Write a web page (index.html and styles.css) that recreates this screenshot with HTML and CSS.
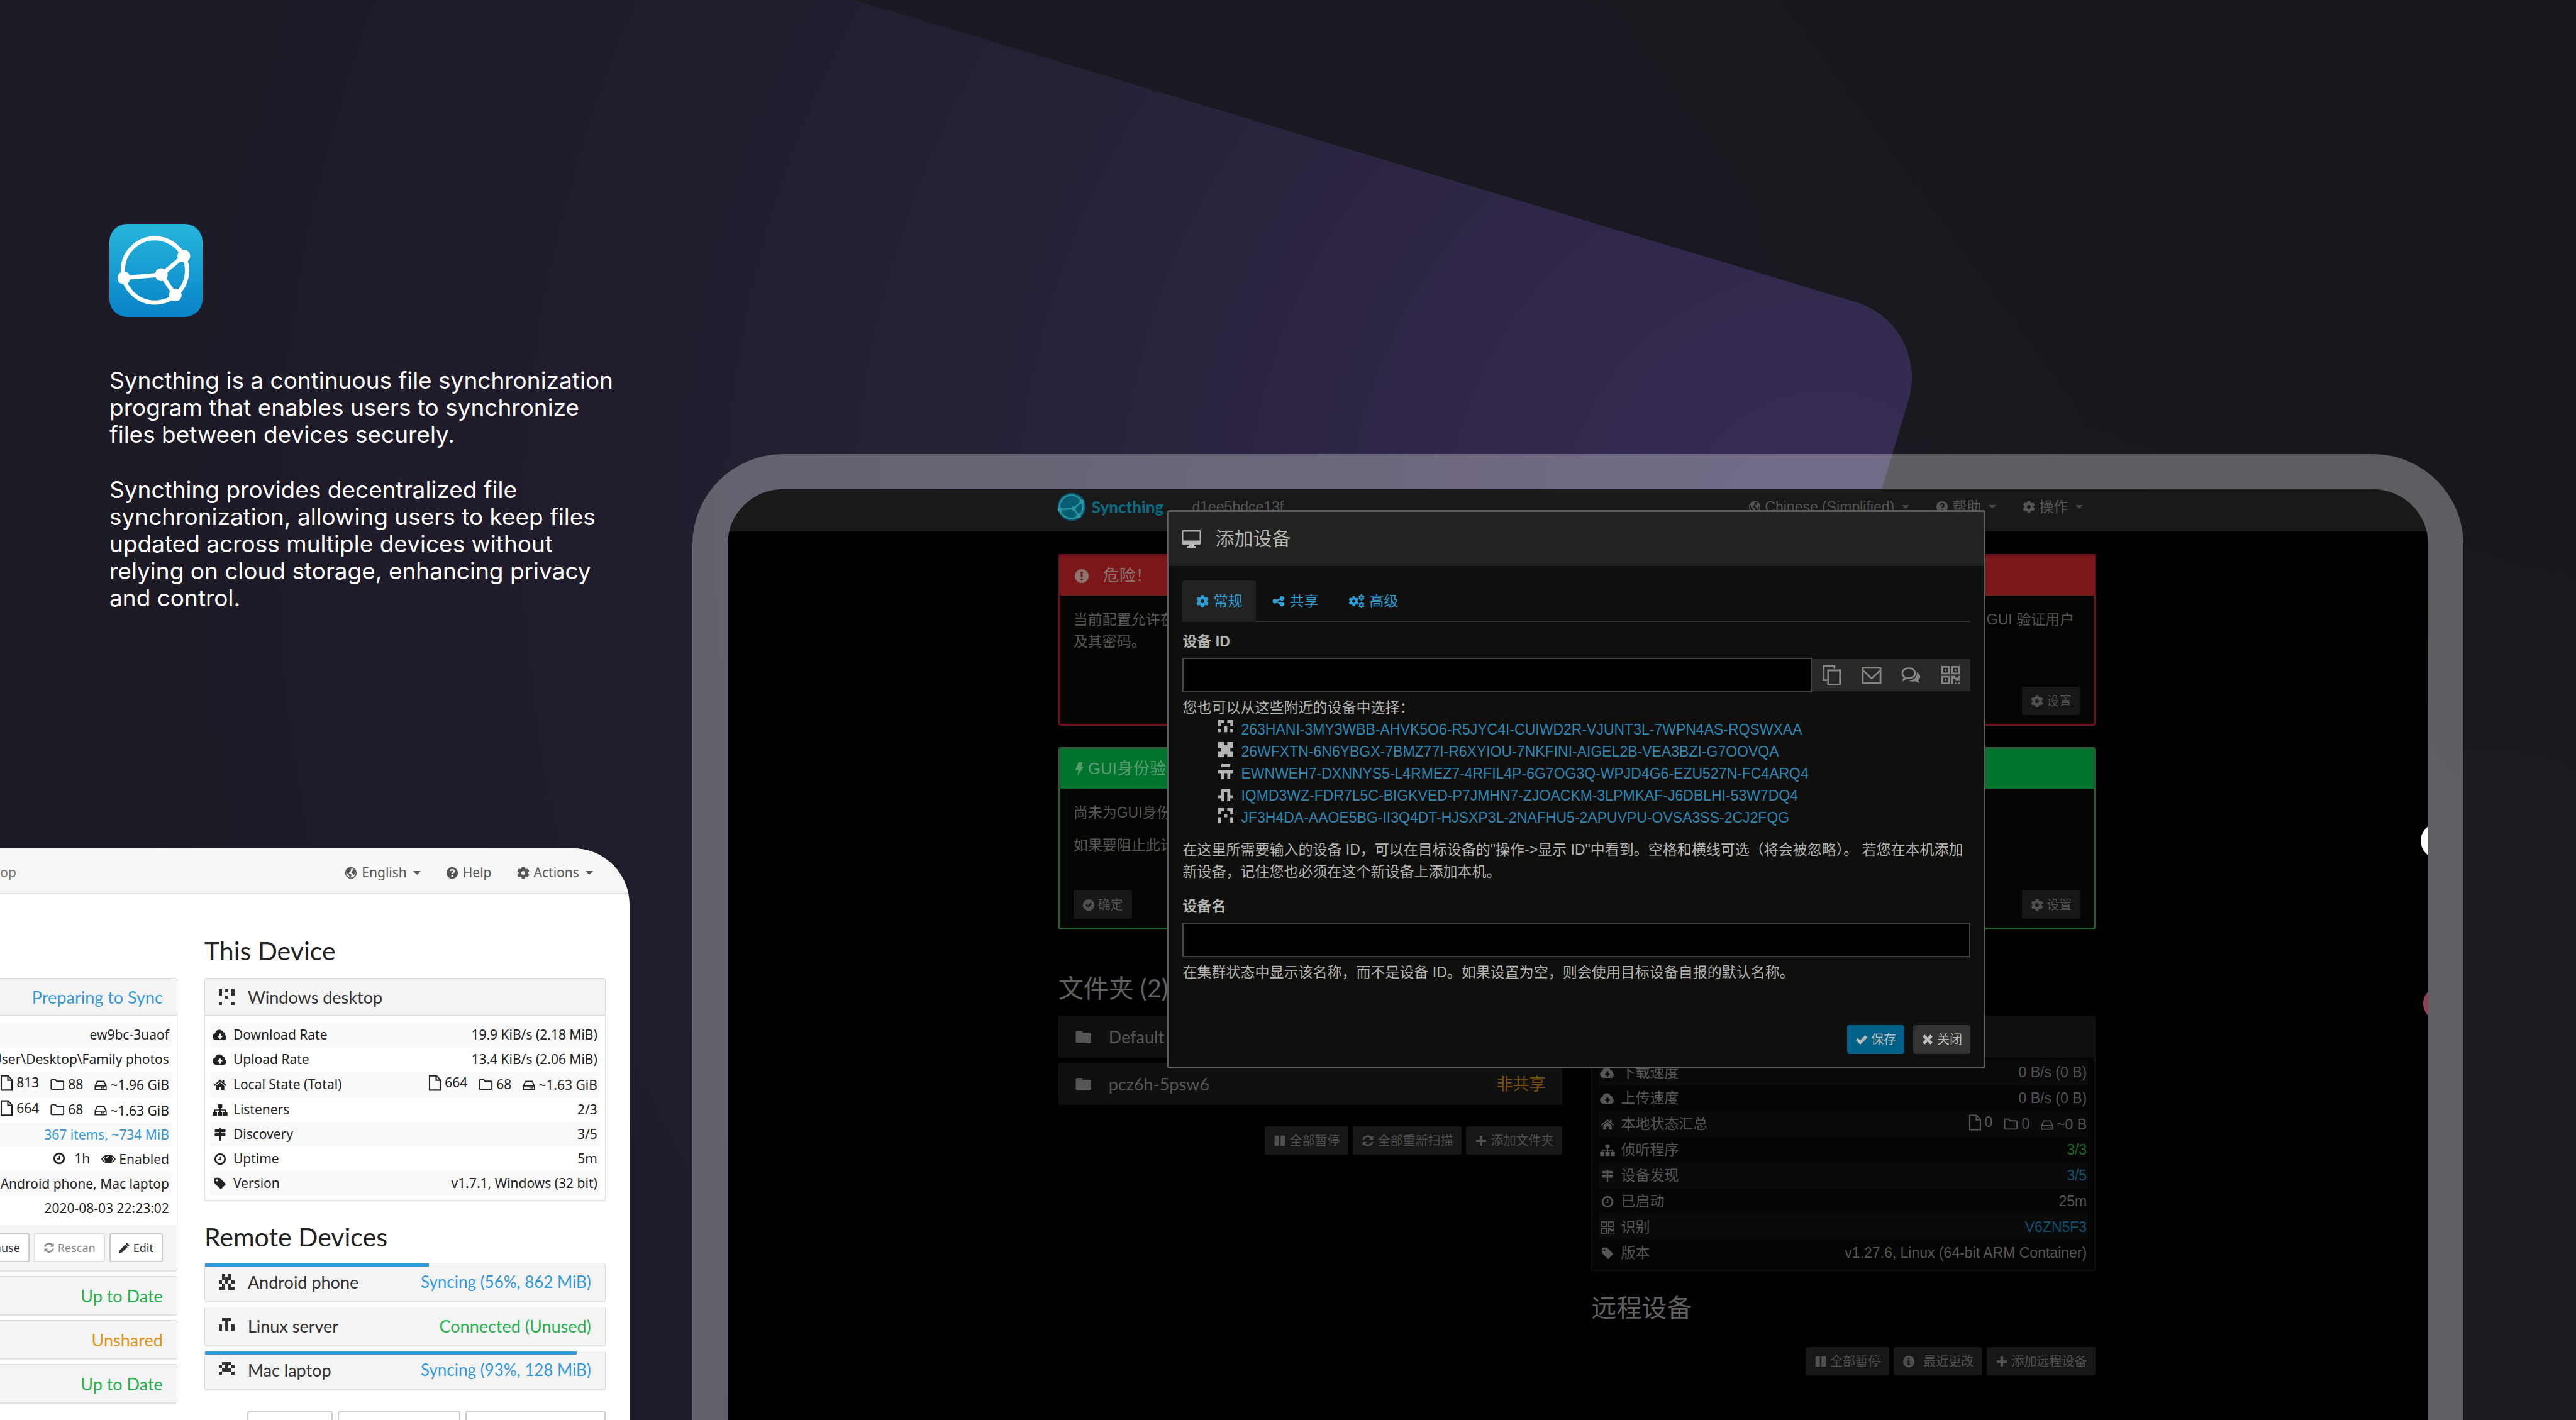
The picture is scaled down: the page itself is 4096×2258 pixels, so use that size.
FILE: index.html
```html
<!DOCTYPE html>
<html lang="en">
<head>
<meta charset="utf-8">
<meta name="viewport" content="width=device-width, initial-scale=1">
<title>Syncthing</title>
<link rel="stylesheet" href="styles.css">
</head>
<body>
<svg class="defs" aria-hidden="true">
  <symbol id="cog" viewBox="0 0 512 512"><path d="M487.4 315.7l-42.6-24.6c4.3-23.2 4.3-47 0-70.2l42.6-24.6c4.9-2.8 7.1-8.6 5.5-14-11.1-35.6-30-67.8-54.7-94.6-3.8-4.1-10-5.1-14.8-2.3L380.8 110c-17.9-15.4-38.5-27.3-60.8-35.1V25.8c0-5.6-3.9-10.5-9.4-11.7-36.7-8.2-74.3-7.8-109.2 0-5.5 1.2-9.4 6.1-9.4 11.7V75c-22.2 7.9-42.8 19.8-60.8 35.1L88.7 85.5c-4.9-2.8-11-1.9-14.8 2.3-24.7 26.7-43.6 58.9-54.7 94.6-1.7 5.4.6 11.2 5.5 14L67.3 221c-4.3 23.2-4.3 47 0 70.2l-42.6 24.6c-4.9 2.8-7.1 8.6-5.5 14 11.1 35.6 30 67.8 54.7 94.6 3.8 4.1 10 5.1 14.8 2.3l42.6-24.6c17.9 15.4 38.5 27.3 60.8 35.1v49.2c0 5.6 3.9 10.5 9.4 11.7 36.7 8.2 74.3 7.8 109.2 0 5.5-1.2 9.4-6.1 9.4-11.7v-49.2c22.2-7.9 42.8-19.8 60.8-35.1l42.6 24.6c4.9 2.8 11 1.9 14.8-2.3 24.7-26.7 43.6-58.9 54.7-94.6 1.5-5.5-.7-11.3-5.6-14.1zM256 336c-44.1 0-80-35.9-80-80s35.9-80 80-80 80 35.9 80 80-35.9 80-80 80z"/></symbol>
  <symbol id="cogs" viewBox="0 0 28 24"><use href="#cog" x="0" y="3" width="18" height="18"/><use href="#cog" x="17" y="0" width="11" height="11"/><use href="#cog" x="17" y="13" width="11" height="11"/></symbol>
  <symbol id="globe" viewBox="0 0 24 24"><path fill-rule="evenodd" d="M12 1a11 11 0 1 0 0 22 11 11 0 0 0 0-22zm0 2a9 9 0 1 1 0 18 9 9 0 0 1 0-18z"/><path d="M4 7l4-4 4-.5 1 2-2 2 1 1.500-2.500 2-1.500 3 3 .5 2.500 2.500-1.500 2.500-1 3.500-2-3-1-3-3-2.500zM15 4l4 2.500 2 4-1.500 1-1 4-2 1.500-1-3.500-2.500-2 .5-3 2.500-1z"/></symbol>
  <symbol id="question" viewBox="0 0 24 24"><path fill-rule="evenodd" d="M12 1a11 11 0 1 0 0 22 11 11 0 0 0 0-22zm-1.600 15.500h3.200v3.100h-3.200zM12 4.600c3 0 5 1.800 5 4.300 0 3.100-3.400 3.500-3.400 5.600h-3.200c0-3.600 3.100-3.900 3.100-5.500 0-.9-.6-1.500-1.600-1.500s-1.700.6-2.200 1.600L7.300 7.500C8.200 5.700 9.900 4.600 12 4.600z"/></symbol>
  <symbol id="exclaim" viewBox="0 0 24 24"><path fill-rule="evenodd" d="M12 1a11 11 0 1 0 0 22 11 11 0 0 0 0-22zM10.200 5h3.600l-.4 8.500h-2.800zm.2 10.500h3.200v3.200h-3.200z"/></symbol>
  <symbol id="info" viewBox="0 0 24 24"><path fill-rule="evenodd" d="M12 1a11 11 0 1 0 0 22 11 11 0 0 0 0-22zM10.400 4.800h3.200v3.100h-3.200zM9 10h4.600v6.500H15V19H9v-2.500h1.400v-4H9z"/></symbol>
  <symbol id="checkcircle" viewBox="0 0 24 24"><path fill-rule="evenodd" d="M12 1a11 11 0 1 0 0 22 11 11 0 0 0 0-22zM6 12.500l2.200-2.200 2.600 2.600 5.400-5.400 2.200 2.200-7.600 7.600z"/></symbol>
  <symbol id="clock" viewBox="0 0 24 24"><path fill-rule="evenodd" d="M12 1a11 11 0 1 0 0 22 11 11 0 0 0 0-22zm0 3.300a7.700 7.700 0 1 1 0 15.400 7.700 7.700 0 0 1 0-15.400z"/><path d="M11.500 7h2v7H8v-2h3.500z"/></symbol>
  <symbol id="bolt" viewBox="0 0 16 24"><path d="M7 1h7l-3 7h4L5 23l2-10H2z"/></symbol>
  <symbol id="down" viewBox="0 0 30 24"><path fill-rule="evenodd" d="M7 22a7 7 0 0 1-2-13.600A8.500 8.500 0 0 1 21 6a5 5 0 0 1 4 6 5.500 5.500 0 0 1-2 10zM13 9v5H9.500l5.500 6 5.500-6H17V9z"/></symbol>
  <symbol id="up" viewBox="0 0 30 24"><path fill-rule="evenodd" d="M7 22a7 7 0 0 1-2-13.600A8.500 8.500 0 0 1 21 6a5 5 0 0 1 4 6 5.500 5.500 0 0 1-2 10zM13 20v-5H9.500L15 9l5.500 6H17v5z"/></symbol>
  <symbol id="home" viewBox="0 0 24 24"><path d="M12 2l4.500 4V3h3.300v6L24 12.700 22.500 14.500 12 5.300 1.500 14.500 0 12.700z"/><path d="M12 7.300l8 7V22h-5.800v-6H9.800v6H4v-7.700z"/></symbol>
  <symbol id="sitemap" viewBox="0 0 28 24"><path d="M10 1h8v7.500h-2.800V11H25v4.500h3V23h-8v-7.500h3V13h-7.800v2.500H18V23h-8v-7.500h2.800V13H5v2.500h3V23H0v-7.500h3V11h9.800V8.500H10z"/></symbol>
  <symbol id="signs" viewBox="0 0 24 24"><path d="M10.500 0h3v2H21l2.500 2.700L21 7.500h-7.500V9.500H22V15h-8.500v9h-3v-9H3L.5 12.300 3 9.500h7.500v-2H2V2h8.500z"/></symbol>
  <symbol id="tag" viewBox="0 0 24 24"><path fill-rule="evenodd" d="M1 3a2 2 0 0 1 2-2h8l12 12-9.500 10L1 11zM6 4a2 2 0 1 0 0 4 2 2 0 0 0 0-4z"/></symbol>
  <symbol id="qr" viewBox="0 0 22 22"><path fill-rule="evenodd" d="M0 0h10v10H0zM2 2v6h6V2zM12 0h10v10H12zM14 2v6h6V2zM0 12h10v10H0zM2 14v6h6v-6zM4 4h2v2H4zM16 4h2v2h-2zM4 16h2v2H4zM12 12h5v2h3v-2h2v6h-5v-2h-3v6h-2zM16 20h2v2h-2zM20 20h2v2h-2z"/></symbol>
  <symbol id="file" viewBox="0 0 22 26"><path fill-rule="evenodd" d="M1 0h13l7 7.500V26H1zM3.200 2.200v21.600h15.600V9.500H12V2.200zM14.200 3v4.300h4z"/></symbol>
  <symbol id="folder-o" viewBox="0 0 26 22"><path fill-rule="evenodd" d="M2.500 1h7L12 4h11l2 2v13l-2 2H2.500L.5 19V3zM2.800 3.200v15.600h20V6.200H11L8.500 3.200z"/></symbol>
  <symbol id="folder" viewBox="0 0 26 22"><path d="M2.500 1h7L12 4h11l2 2v13l-2 2H2.500L.5 19V3z"/></symbol>
  <symbol id="hdd" viewBox="0 0 24 20"><path fill-rule="evenodd" d="M5 1h14l4.500 10v8H.5v-8zM6.400 3L3.200 10h17.600L17.600 3zM2.500 12v5h19v-5zM13 13.500h2v2h-2zM17 13.500h2v2h-2z"/></symbol>
  <symbol id="eye" viewBox="0 0 28 20"><path fill-rule="evenodd" d="M0 10C3 4.500 8 1.500 14 1.500S25 4.500 28 10c-3 5.500-8 8.500-14 8.500S3 15.500 0 10zm2.500 0c1.500 2.300 3.500 4 5.800 5.200a8 8 0 0 1 0-10.400C6 6 4 7.700 2.500 10zm23 0c-1.500-2.300-3.500-4-5.800-5.200a8 8 0 0 1 0 10.400C22 14 24 12.300 25.500 10zM11 8.500a4 4 0 0 1 3.500-3V4A5 5 0 0 0 9.500 8.500z"/></symbol>
  <symbol id="refresh" viewBox="0 0 24 24"><path d="M22 2v8h-8l3-3A7.300 7.300 0 0 0 5 10H1.600A10.600 10.600 0 0 1 19.400 4.600zM2 22v-8h8l-3 3a7.300 7.300 0 0 0 12-3h3.400A10.600 10.600 0 0 1 4.600 19.400z"/></symbol>
  <symbol id="pencil" viewBox="0 0 24 24"><path d="M17.500 1.500l5 5-3 3-5-5zM13.300 5.700l5 5L7 22l-6 1 1-6z"/></symbol>
  <symbol id="pause" viewBox="0 0 22 24"><path d="M1 2h8.500v20H1zM12.500 2H21v20h-8.500z"/></symbol>
  <symbol id="plus" viewBox="0 0 22 24"><path d="M8.500 2.500h5v7h7v5h-7v7h-5v-7h-7v-5h7z"/></symbol>
  <symbol id="check" viewBox="0 0 24 24"><path d="M1 13l4-4 4.500 4.500L19 4l4 4L9.500 21.500z"/></symbol>
  <symbol id="times" viewBox="0 0 24 24"><path d="M6.500 2.500L12 8l5.500-5.500 4 4L16 12l5.500 5.500-4 4L12 16l-5.500 5.500-4-4L8 12 2.500 6.500z"/></symbol>
  <symbol id="share" viewBox="0 0 24 24"><path d="M18.500 2a4.500 4.500 0 1 1-3.300 7.600L9.500 12l5.700 2.400a4.500 4.500 0 1 1-1.200 2.800L8.300 15a4.500 4.500 0 1 1 0-6L14 6.800A4.500 4.500 0 0 1 18.500 2z"/></symbol>
  <symbol id="monitor" viewBox="0 0 31 28"><path fill-rule="evenodd" d="M2 0h27l2 2v19l-2 2H19l1 3h2v2H9v-2h2l1-3H2l-2-2V2zM2.500 2.500v14h26v-14z"/></symbol>
  <symbol id="copy" viewBox="0 0 32 36"><path fill="none" stroke="currentColor" stroke-width="3" d="M8 26H2V2h18v5M9.500 9.500h20v24h-20z"/></symbol>
  <symbol id="mail" viewBox="0 0 34 30"><path fill="none" stroke="currentColor" stroke-width="3" d="M2 2h30v26H2zM3 7l14 13L31 7"/></symbol>
  <symbol id="chat" viewBox="0 0 36 30"><path fill="none" stroke="currentColor" stroke-width="3" d="M13.500 2C7 2 2 6 2 11c0 3 1.500 5.500 4 7l-2 5 6-3.500C18 21 25 17 25 11c0-5-5-9-11.500-9z"/><path d="M28 9c4 2 6 5 6 8 0 2.500-1.500 5-3.500 6.500L33 29l-8-3.500c-4 1-8 .5-11-1.500 9-.5 14.500-6 14-15z"/></symbol>
  <symbol id="caret" viewBox="0 0 12 6"><path d="M0 0h12L6 6z"/></symbol>
  <symbol id="mark" viewBox="0 0 174 174"><g fill="none" stroke="currentColor" stroke-width="8"><circle cx="85" cy="87" r="60"/><path d="M27 101l70-6 42-35M97 95l26 38"/></g><g><circle cx="27" cy="101" r="12"/><circle cx="97" cy="95" r="12"/><circle cx="139" cy="60" r="12"/><circle cx="123" cy="133" r="12"/></g></symbol>
  <symbol id="id-win" viewBox="0 0 5 5"><path d="M0 0h1v2H0zM2 0h1v1H2zM4 0h1v2H4zM2 2h1v1H2zM0 4h1v1H0zM4 4h1v1H4z"/></symbol>
  <symbol id="id-android" viewBox="0 0 5 5"><path d="M1 0h1v1h1V0h1v2H3v1H2V2H1zM0 2h1v1H0zM4 2h1v1H4zM1 3h1v2H0V4h1zM3 3h1v1h1v1H3z"/></symbol>
  <symbol id="id-linux" viewBox="0 0 5 5"><path d="M1 0h3v1H3v3H2V1H1zM0 2h1v2H0zM4 2h1v2H4z"/></symbol>
  <symbol id="id-mac" viewBox="0 0 5 5"><path d="M1 0h3v1H3v1h1v1H1V2h1V1H1zM0 1h1v1H0zM4 1h1v1H4zM0 3h1v1H0zM4 3h1v1H4z"/></symbol>
  <symbol id="id-1" viewBox="0 0 5 5"><path d="M0 0h2v1H1v1H0zM3 0h2v2H4V1H3zM2 2h1v2H2zM0 3h1v1H0zM4 3h1v1H4z"/></symbol>
  <symbol id="id-2" viewBox="0 0 5 5"><path d="M0 0h2v1h1V0h2v2H4v1h1v2H3V4H2v1H0V3h1V2H0z"/></symbol>
  <symbol id="id-3" viewBox="0 0 5 5"><path d="M1 0h3v1H1zM0 2h5v1H4v2H3V3H2v2H1V3H0z"/></symbol>
  <symbol id="id-4" viewBox="0 0 5 5"><path d="M1 1h3v2h1v1H4v1H3V2H2v3H1V4H0V3h1z"/></symbol>
  <symbol id="id-5" viewBox="0 0 5 5"><path d="M0 0h2v1H1v1H0zM3 0h2v2H4V1H3zM2 2h1v1H2zM0 3h1v2H0zM4 3h1v2H4z"/></symbol>
</svg>

<svg class="backdrop" viewBox="0 0 4096 2258" preserveAspectRatio="none" aria-hidden="true">
  <defs>
    <linearGradient id="base" x1="0" y1="0.4" x2="1" y2="0"><stop offset="0" stop-color="#1d1a26"/><stop offset="0.55" stop-color="#1a1922"/><stop offset="1" stop-color="#15171a"/></linearGradient>
    <radialGradient id="violet" gradientUnits="userSpaceOnUse" cx="2900" cy="850" r="2700"><stop offset="0" stop-color="#382e57"/><stop offset="0.2" stop-color="#31284b"/><stop offset="0.45" stop-color="#28223a"/><stop offset="0.7" stop-color="#211d2d"/><stop offset="1" stop-color="#1d1a26"/></radialGradient>
    <linearGradient id="floor" x1="0" y1="0" x2="0" y2="1"><stop offset="0.3" stop-color="#1c1d21" stop-opacity="0"/><stop offset="0.7" stop-color="#1c1d21"/></linearGradient>
  </defs>
  <rect width="4096" height="2258" fill="url(#base)"/>
  <rect x="3000" width="1096" height="2258" fill="url(#floor)"/>
  <path fill="url(#violet)" d="M0 0H1358L2950 480A125 125 0 0 1 3035 635L2547 2258H0z"/>
</svg>

<main class="stage">
  <section class="side">
    <div class="intro">
      <div class="app-logo"><svg><use href="#mark"/></svg></div>
      <p>Syncthing is a continuous file synchronization program that enables users to synchronize files between devices securely.</p>
      <p>Syncthing provides decentralized file synchronization, allowing users to keep files updated across multiple devices without relying on cloud storage, enhancing privacy and control.</p>
    </div>

    <div class="light">
      <nav class="light-nav">
        <span class="light-brand">Windows desktop</span>
        <a href="#"><svg class="icon"><use href="#globe"/></svg>English<svg class="caret"><use href="#caret"/></svg></a>
        <a href="#"><svg class="icon"><use href="#question"/></svg>Help</a>
        <a href="#"><svg class="icon"><use href="#cog"/></svg>Actions<svg class="caret"><use href="#caret"/></svg></a>
      </nav>
      <div class="light-body">
        <div class="col">
          <h3>Folders</h3>
          <article class="card">
            <header>Family photos<span class="blue">Preparing to Sync</span></header>
            <table>
              <tr><th>Folder ID</th><td>ew9bc-3uaof</td></tr>
              <tr><th>Folder Path</th><td>C:\Users\User\Desktop\Family photos</td></tr>
              <tr><th>Global State</th><td><span class="stat"><svg class="file"><use href="#file"/></svg>813</span><span class="stat"><svg class="dir"><use href="#folder-o"/></svg>88</span><span class="stat"><svg class="hdd"><use href="#hdd"/></svg>~1.96 GiB</span></td></tr>
              <tr><th>Local State</th><td><span class="stat"><svg class="file"><use href="#file"/></svg>664</span><span class="stat"><svg class="dir"><use href="#folder-o"/></svg>68</span><span class="stat"><svg class="hdd"><use href="#hdd"/></svg>~1.63 GiB</span></td></tr>
              <tr><th>Out of Sync Items</th><td><a class="blue" href="#">367 items, ~734 MiB</a></td></tr>
              <tr><th>Rescans</th><td><span class="stat wide"><svg class="icon"><use href="#clock"/></svg>1h</span><span class="stat"><svg class="eye"><use href="#eye"/></svg>Enabled</span></td></tr>
              <tr><th>Shared With</th><td>Android phone, Mac laptop</td></tr>
              <tr><th>Last Scan</th><td>2020-08-03 22:23:02</td></tr>
            </table>
            <footer>
              <button type="button"><svg class="icon"><use href="#pause"/></svg>Pause</button>
              <button type="button" disabled><svg class="icon"><use href="#refresh"/></svg>Rescan</button>
              <button type="button"><svg class="icon"><use href="#pencil"/></svg>Edit</button>
            </footer>
          </article>
          <article class="card"><header>Documents<span class="green">Up to Date</span></header></article>
          <article class="card"><header>Music<span class="orange">Unshared</span></header></article>
          <article class="card"><header>Notes<span class="green">Up to Date</span></header></article>
        </div>
        <div class="col">
          <h3>This Device</h3>
          <article class="card">
            <header><svg class="ident"><use href="#id-win"/></svg>Windows desktop</header>
            <table>
              <tr><th><svg class="icon wide-icon"><use href="#down"/></svg>Download Rate</th><td>19.9 KiB/s (2.18 MiB)</td></tr>
              <tr><th><svg class="icon wide-icon"><use href="#up"/></svg>Upload Rate</th><td>13.4 KiB/s (2.06 MiB)</td></tr>
              <tr><th><svg class="icon wide-icon"><use href="#home"/></svg>Local State (Total)</th><td><span class="stat"><svg class="file"><use href="#file"/></svg>664</span><span class="stat"><svg class="dir"><use href="#folder-o"/></svg>68</span><span class="stat"><svg class="hdd"><use href="#hdd"/></svg>~1.63 GiB</span></td></tr>
              <tr><th><svg class="icon wide-icon"><use href="#sitemap"/></svg>Listeners</th><td>2/3</td></tr>
              <tr><th><svg class="icon wide-icon"><use href="#signs"/></svg>Discovery</th><td>3/5</td></tr>
              <tr><th><svg class="icon wide-icon"><use href="#clock"/></svg>Uptime</th><td>5m</td></tr>
              <tr><th><svg class="icon wide-icon"><use href="#tag"/></svg>Version</th><td>v1.7.1, Windows (32 bit)</td></tr>
            </table>
          </article>
          <h3 class="second">Remote Devices</h3>
          <article class="card"><div class="bar" style="width:56%"></div><header><svg class="ident"><use href="#id-android"/></svg>Android phone<span class="blue progress">Syncing (56%, 862 MiB)</span></header></article>
          <article class="card"><header><svg class="ident"><use href="#id-linux"/></svg>Linux server<span class="green">Connected (Unused)</span></header></article>
          <article class="card"><div class="bar" style="width:93%"></div><header><svg class="ident"><use href="#id-mac"/></svg>Mac laptop<span class="blue progress">Syncing (93%, 128 MiB)</span></header></article>
          <div class="tail">
            <button type="button"><svg class="icon"><use href="#pause"/></svg>Pause All</button>
            <button type="button"><svg class="icon"><use href="#info"/></svg>Recent Changes</button>
            <button type="button"><svg class="icon"><use href="#plus"/></svg>Add Remote Device</button>
          </div>
        </div>
      </div>
    </div>
  </section>

  <section class="device" lang="zh-CN">
    <div class="screen">
      <nav class="dark-nav"><div class="wrap">
        <a class="brand" href="#"><svg><use href="#mark"/></svg>Syncthing</a>
        <span class="host">d1ee5hdce13f</span>
        <a class="first" href="#"><svg class="icon"><use href="#globe"/></svg>Chinese (Simplified)<svg class="caret"><use href="#caret"/></svg></a>
        <a href="#"><svg class="icon"><use href="#question"/></svg>帮助<svg class="caret"><use href="#caret"/></svg></a>
        <a href="#"><svg class="icon"><use href="#cog"/></svg>操作<svg class="caret"><use href="#caret"/></svg></a>
      </div></nav>

      <div class="wrap page">
        <article class="notice danger">
          <header><svg class="icon"><use href="#exclaim"/></svg>危险！</header>
          <div class="notice-body">
            <p class="split"><span>当前配置允许在不使用密码的情况下远程访问</span><span>请设置 GUI 验证用户</span></p>
            <p>及其密码。</p>
          </div>
          <footer><button class="dim push" type="button"><svg class="icon"><use href="#cog"/></svg>设置</button></footer>
        </article>
        <article class="notice success">
          <header><svg class="bolt"><use href="#bolt"/></svg>GUI身份验证</header>
          <div class="notice-body spaced">
            <p>尚未为GUI身份验证设置用户名和密码。</p>
            <p>如果要阻止此计算机上的其他用户访问，请设置身份验证。</p>
          </div>
          <footer><button class="dim" type="button"><svg class="icon"><use href="#checkcircle"/></svg>确定</button><button class="dim push" type="button"><svg class="icon"><use href="#cog"/></svg>设置</button></footer>
        </article>

        <div class="columns">
          <div>
            <h3>文件夹 (2)</h3>
            <div class="row"><svg class="dir"><use href="#folder"/></svg>Default Folder</div>
            <div class="row"><svg class="dir"><use href="#folder"/></svg>pcz6h-5psw6<span class="unshared">非共享</span></div>
            <div class="actions">
              <button class="dim" type="button"><svg class="icon"><use href="#pause"/></svg>全部暂停</button>
              <button class="dim" type="button"><svg class="icon"><use href="#refresh"/></svg>全部重新扫描</button>
              <button class="dim" type="button"><svg class="icon"><use href="#plus"/></svg>添加文件夹</button>
            </div>
          </div>
          <div>
            <h3>当前设备</h3>
            <div class="panel">
              <div class="row"></div>
              <table>
                <tr><th><svg class="icon wide-icon"><use href="#down"/></svg>下载速度</th><td>0 B/s (0 B)</td></tr>
                <tr><th><svg class="icon wide-icon"><use href="#up"/></svg>上传速度</th><td>0 B/s (0 B)</td></tr>
                <tr><th><svg class="icon wide-icon"><use href="#home"/></svg>本地状态汇总</th><td><span class="stat"><svg class="file"><use href="#file"/></svg>0</span><span class="stat"><svg class="dir"><use href="#folder-o"/></svg>0</span><span class="stat"><svg class="hdd"><use href="#hdd"/></svg>~0 B</span></td></tr>
                <tr><th><svg class="icon wide-icon"><use href="#sitemap"/></svg>侦听程序</th><td class="ok">3/3</td></tr>
                <tr><th><svg class="icon wide-icon"><use href="#signs"/></svg>设备发现</th><td class="part">3/5</td></tr>
                <tr><th><svg class="icon wide-icon"><use href="#clock"/></svg>已启动</th><td>25m</td></tr>
                <tr><th><svg class="icon wide-icon"><use href="#qr"/></svg>识别</th><td><a class="part" href="#">V6ZN5F3</a></td></tr>
                <tr><th><svg class="icon wide-icon"><use href="#tag"/></svg>版本</th><td>v1.27.6, Linux (64-bit ARM Container)</td></tr>
              </table>
            </div>
            <h3 class="second">远程设备</h3>
            <div class="actions close">
              <button class="dim" type="button"><svg class="icon"><use href="#pause"/></svg>全部暂停</button>
              <button class="dim roomy" type="button"><svg class="icon"><use href="#info"/></svg>最近更改</button>
              <button class="dim" type="button"><svg class="icon"><use href="#plus"/></svg>添加远程设备</button>
            </div>
          </div>
        </div>
      </div>

      <span class="dot white"></span>
      <span class="dot pink"></span>

      <form class="modal" role="dialog" aria-labelledby="dlg-title">
        <header><svg><use href="#monitor"/></svg><h2 id="dlg-title">添加设备</h2></header>
        <div class="modal-body">
          <div class="tabs">
            <a class="active" href="#"><svg class="icon"><use href="#cog"/></svg>常规</a>
            <a href="#"><svg class="icon"><use href="#share"/></svg>共享</a>
            <a href="#"><svg class="icon cogs"><use href="#cogs"/></svg>高级</a>
          </div>
          <label for="device-id">设备 ID</label>
          <div class="group">
            <input id="device-id" type="text">
            <button type="button" aria-label="复制"><svg><use href="#copy"/></svg></button>
            <button type="button" aria-label="邮件"><svg><use href="#mail"/></svg></button>
            <button type="button" aria-label="短信"><svg><use href="#chat"/></svg></button>
            <button type="button" aria-label="二维码"><svg class="qr"><use href="#qr"/></svg></button>
          </div>
          <p class="nearby">您也可以从这些附近的设备中选择：</p>
          <ul>
            <li><svg><use href="#id-1"/></svg><a href="#">263HANI-3MY3WBB-AHVK5O6-R5JYC4I-CUIWD2R-VJUNT3L-7WPN4AS-RQSWXAA</a></li>
            <li><svg><use href="#id-2"/></svg><a href="#">26WFXTN-6N6YBGX-7BMZ77I-R6XYIOU-7NKFINI-AIGEL2B-VEA3BZI-G7OOVQA</a></li>
            <li><svg><use href="#id-3"/></svg><a href="#">EWNWEH7-DXNNYS5-L4RMEZ7-4RFIL4P-6G7OG3Q-WPJD4G6-EZU527N-FC4ARQ4</a></li>
            <li><svg><use href="#id-4"/></svg><a href="#">IQMD3WZ-FDR7L5C-BIGKVED-P7JMHN7-ZJOACKM-3LPMKAF-J6DBLHI-53W7DQ4</a></li>
            <li><svg><use href="#id-5"/></svg><a href="#">JF3H4DA-AAOE5BG-II3Q4DT-HJSXP3L-2NAFHU5-2APUVPU-OVSA3SS-2CJ2FQG</a></li>
          </ul>
          <p class="help">在这里所需要输入的设备 ID，可以在目标设备的"操作-&gt;显示 ID"中看到。空格和横线可选（将会被忽略）。 若您在本机添加新设备，记住您也必须在这个新设备上添加本机。</p>
          <label for="device-name">设备名</label>
          <input id="device-name" type="text">
          <p>在集群状态中显示该名称，而不是设备 ID。如果设置为空，则会使用目标设备自报的默认名称。</p>
          <footer>
            <button class="save" type="button"><svg class="icon"><use href="#check"/></svg>保存</button>
            <button type="button"><svg class="icon"><use href="#times"/></svg>关闭</button>
          </footer>
        </div>
      </form>
    </div>
  </section>
</main>
</body>
</html>
```
FILE: styles.css
```css
*, *::before, *::after { box-sizing: border-box; }
html, body { margin: 0; height: 100%; overflow: hidden; background: #1a1922; }
h2, h3, p, ul { margin: 0; padding: 0; font-weight: 400; }
ul { list-style: none; }
a { color: inherit; text-decoration: none; }
button, input { font: inherit; color: inherit; margin: 0; }
svg { display: block; flex: none; fill: currentColor; }
table { width: 100%; border-collapse: collapse; }
th { font-weight: 400; text-align: left; }
.defs { position: absolute; width: 0; height: 0; }
.icon { width: 20px; height: 20px; }
.caret { width: 12px; height: 6px; }

.backdrop { position: absolute; inset: 0; width: 100%; height: 100%; }

.stage {
  position: relative;
  display: grid;
  grid-template-columns: 43fr 110fr 7fr;
  height: 100vh;
  overflow: hidden;
}

/* introduction */
.side { min-width: 0; padding-top: 356px; }
.intro {
  margin-left: 174px;
  max-width: 815px;
  color: #fff;
  font: 37px/43px Inter, sans-serif;
}
.intro p + p { margin-top: 45px; }
.app-logo {
  width: 148px;
  height: 148px;
  margin-bottom: 79px;
  border-radius: 28px;
  background: linear-gradient(#27b6dc, #0882c8);
}
.app-logo svg { width: 148px; height: 148px; }

/* light window */
.light {
  margin: 377px 100px 0 -384px;
  padding-bottom: 60px;
  border-top-right-radius: 90px;
  background: #fff;
  color: #222;
  overflow: hidden;
  font: 21px/35px "Noto Sans", sans-serif;
}
.light-nav {
  display: flex;
  align-items: center;
  gap: 40px;
  height: 73px;
  padding: 6px 58px 0 28px;
  border-bottom: 2px solid #e7e7e7;
  background: #f6f6f6;
  color: #555;
}
.light-nav a { display: flex; align-items: center; gap: 7px; }
.light-nav .caret { margin-left: 3px; }
.light-brand { width: 382px; margin-right: auto; text-align: right; color: #777; }
.light-body { display: grid; grid-template-columns: 1fr 1fr; gap: 43px; padding: 0 38px 0 28px; }
.light h3 { margin: 68px 0 21px; font: 41px/44px Lato, sans-serif; }
.light h3.second { margin: 36px 0 19px; }
.card {
  position: relative;
  border: 1px solid #ddd;
  border-radius: 3px;
  box-shadow: 0 1px 2px #0002;
}
.card + .card { margin-top: 8px; }
.card header {
  display: flex;
  align-items: center;
  height: 60px;
  padding: 0 22px;
  background: #f4f4f4;
  color: #333;
  font: 27px/35px Lato, sans-serif;
}
.card header span { margin-left: auto; }
.card header .progress { font-size: 26px; }
.card .ident { width: 25px; height: 25px; margin-right: 21px; }
.bar { position: absolute; top: 0; left: 0; height: 5px; background: #3598db; }
.card table { margin: 10px 8px 7px; width: calc(100% - 16px); border-top: 0; }
.card header:not(:last-child) { border-bottom: 2px solid #ddd; }
.card th, .card td { height: 39px; padding: 0 4px; line-height: 35px; }
.card tr:nth-child(odd) { background: #f9f9f9; }
td { text-align: right; white-space: nowrap; }
th .icon { display: inline-block; vertical-align: -3px; margin-right: 9px; }
th .wide-icon { width: 24px; margin-right: 9px; }
.stat { display: inline-flex; align-items: center; gap: 5px; margin-left: 18px; }
.stat.wide { gap: 14px; }
.file { width: 21px; height: 26px; }
.dir { width: 23px; height: 21px; }
.hdd { width: 20px; height: 18px; }
.eye { width: 23px; height: 18px; }
.blue { color: #3598db; }
.green { color: #27b34f; }
.orange { color: #e09420; }
.card footer {
  display: flex;
  justify-content: flex-end;
  gap: 7px;
  padding: 13px 22px;
  background: #f4f4f4;
}
.light button {
  display: flex;
  align-items: center;
  justify-content: center;
  gap: 5px;
  height: 46px;
  padding: 0 13px;
  border: 2px solid #ccc;
  border-radius: 3px;
  background: #fff;
  color: #333;
  font-size: 18px;
}
.light button .icon { width: 18px; height: 18px; }
.light button:disabled { color: #888; border-color: #ddd; }
.tail { display: flex; justify-content: flex-end; gap: 8px; margin-top: 34px; }
.light .tail button { padding: 0 16px; }

/* tablet */
.device {
  height: 2000px;
  margin-top: 722px;
  border: 56px solid rgba(255, 255, 255, 0.3);
  border-radius: 144px;
  background: #000 padding-box;
  overflow: hidden;
}
.screen {
  position: relative;
  height: 100%;
  overflow: hidden;
  color: #555;
  font: 23px/35px "Liberation Sans", "Noto Sans CJK SC", sans-serif;
}
.wrap { width: 61%; margin-left: 19.45%; }
.dark-nav { height: 67px; background: #191919; }
.dark-nav .wrap { display: flex; align-items: center; height: 56px; }
.dark-nav a { display: flex; align-items: center; gap: 6px; margin-left: 42px; }
.dark-nav .caret { margin: 0 0 0 6px; opacity: 0.8; }
.dark-nav a.brand { gap: 7px; margin-left: -4px; color: #0a6a80; font: 900 26px/35px Lato, sans-serif; }
.brand svg { width: 54px; height: 54px; margin: 0 -2px; color: #2d93a3; border-radius: 50%; background: radial-gradient(circle, #075d72 56%, #0000 60%); }
.host { margin-left: 45px; }
.dark-nav a.first { margin-left: auto; }
.dark-nav a:last-child { margin-right: 20px; }
.page { padding-top: 36px; }

.notice {
  display: flex;
  flex-direction: column;
  border: 3px solid;
  border-radius: 3px;
  background: #050503;
}
.notice header {
  display: flex;
  align-items: center;
  gap: 22px;
  height: 63px;
  padding: 0 22px;
  font-size: 26px;
}
.notice header .icon { width: 24px; height: 24px; color: #8d7373; }
.notice header .bolt { width: 16px; height: 24px; margin-right: -16px; }
.danger { min-height: 273px; margin-bottom: 34px; border-color: #6a1021; }
.danger header { background: #7b1619; color: #8d7373; }
.success { min-height: 290px; border-color: #2a5a34; }
.success header { background: #00732d; color: #5c9a72; }
.notice-body { flex: 1; padding: 21px 31px 0 21px; }
.split { display: flex; justify-content: space-between; }
.spaced p + p { margin-top: 17px; }
.notice footer { display: flex; padding: 0 21px 14px; }
.push { margin-left: auto; }

button.dim {
  display: flex;
  align-items: center;
  gap: 5px;
  height: 45px;
  padding: 0 14px;
  border: 0;
  border-radius: 3px;
  background: #171717;
  color: #505050;
  font-size: 20px;
  line-height: 28px;
}
button.roomy { gap: 13px; }

.columns { display: grid; grid-template-columns: 1fr 1fr; gap: 46px; }
.columns h3 { margin: 71px 0 22px; color: #606060; font: 40px/44px Lato, "Noto Sans CJK SC", sans-serif; }
.columns h3.second { margin: 36px 0 41px; }
.row {
  display: flex;
  align-items: center;
  height: 67px;
  padding: 0 27px;
  border-radius: 3px;
  background: #0f100f;
  font: 27px/35px Lato, "Noto Sans CJK SC", sans-serif;
}
.row + .row { margin-top: 8px; }
.row .dir { width: 26px; height: 22px; margin-right: 27px; }
.unshared { margin-left: auto; color: #7a5008; font-size: 26px; }
.actions { display: flex; justify-content: flex-end; gap: 7px; margin-top: 34px; }
.actions.close { margin-top: 0; }
.panel { border: 2px solid #101010; border-top: 0; border-radius: 3px; background: #050505; }
.panel table { width: calc(100% - 20px); margin: 3px 10px 6px; }
.panel th, .panel td { height: 41px; padding: 0 2px; line-height: 35px; }
.panel tr:nth-child(odd) { background: #0a0a0a; }
.panel th .wide-icon { width: 24px; margin-right: 9px; }
.ok { color: #17652f; }
.part { color: #14506f; }

.dot { position: absolute; width: 56px; height: 56px; border-radius: 50%; right: -44px; }
.dot.white { top: 531px; background: #fff; }
.dot.pink { top: 790px; right: -48px; background: #8d4058; }

/* dialog */
.modal {
  position: absolute;
  top: 33px;
  left: 0;
  right: 4px;
  width: 48.1%;
  margin: 0 auto;
  border: 3px solid #5f5f5d;
  border-radius: 4px;
  background: #0f0f0d;
  color: #b4b4b2;
}
.modal > header { display: flex; align-items: center; gap: 22px; height: 86px; padding: 0 20px; background: #222220; }
.modal > header svg { width: 31px; height: 28px; }
.modal h2 { font-size: 30px; line-height: 40px; }
.modal-body { padding: 23px 21px 20px; }
.tabs { display: flex; gap: 4px; height: 66px; margin-bottom: 14px; border-bottom: 2px solid #333331; color: #2b9fd6; }
.tabs a { display: flex; align-items: center; gap: 7px; height: 66px; padding: 0 22px; border-radius: 4px 4px 0 0; }
.tabs .active { background: #222220; }
.tabs .cogs { width: 26px; height: 22px; }
.modal label { display: block; margin-bottom: 8px; font-weight: 700; }
.modal input { display: block; width: 100%; height: 55px; padding: 0 20px; border: 2px solid #444442; border-radius: 0; background: #000; }
.group { display: flex; align-items: stretch; }
.group input { flex: 1; width: auto; min-width: 0; }
.group button { display: grid; place-items: center; width: 63px; margin: 2px 0; padding: 0; border: 0; background: #282827; color: #858583; }
.group svg { width: 32px; height: 34px; }
.group .qr { width: 29px; height: 29px; }
.nearby { margin-top: 7px; }
.modal li { display: flex; align-items: flex-start; gap: 12px; margin-left: 57px; color: #2c86b4; }
.modal li svg { width: 24px; height: 24px; margin-top: 2px; color: #b4b4b2; }
.help { margin: 16px 0 20px; }
.modal input + p { margin-top: 7px; }
.modal footer { display: flex; justify-content: flex-end; gap: 14px; margin-top: 66px; }
.modal footer button { display: flex; align-items: center; gap: 5px; height: 46px; padding: 0 13px; border: 0; border-radius: 4px; background: #333332; color: #bdbdbb; font-size: 20px; }
.modal footer .save { background: #026189; }
```
